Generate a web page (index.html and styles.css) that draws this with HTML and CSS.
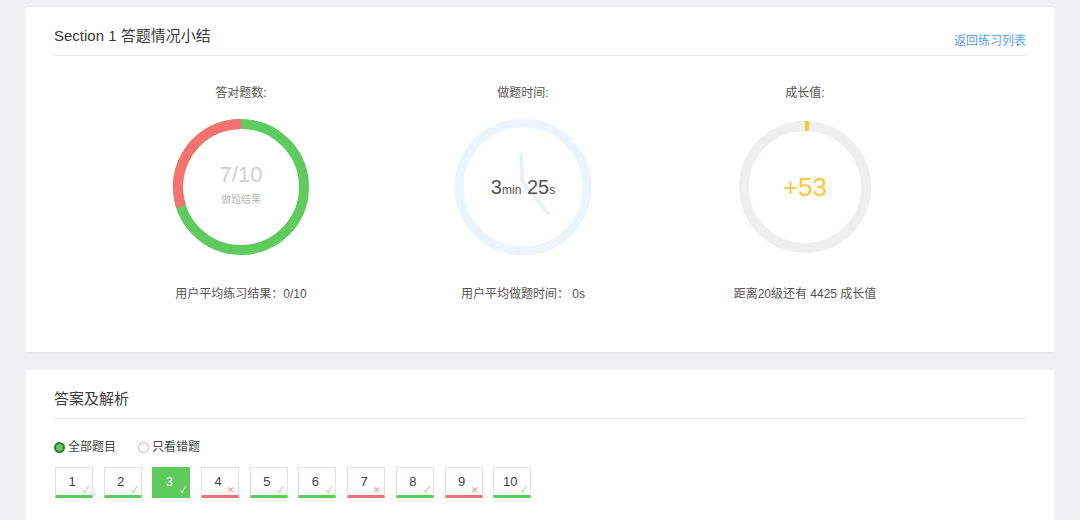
FILE: index.html
```html
<!DOCTYPE html>
<html lang="zh">
<head>
<meta charset="utf-8">
<title>Section 1 答题情况小结</title>
<link rel="stylesheet" href="styles.css">
</head>
<body>
<div class="page">
  <section class="card summary">
    <div class="card-head">
      <h2 class="card-title">Section 1 答题情况小结</h2>
      <a class="back-link" href="#">返回练习列表</a>
    </div>
    <div class="stats">
      <div class="stat">
        <div class="stat-label">答对题数:</div>
        <div class="ring">
          <svg width="140" height="140" viewBox="0 0 140 140">
            <circle cx="70" cy="70" r="63" fill="none" stroke="#5fcb5f" stroke-width="10"/>
            <circle cx="70" cy="70" r="63" fill="none" stroke="#f87171" stroke-width="10" stroke-dasharray="118.75 400" transform="rotate(-198 70 70)"/>
          </svg>
          <div class="ring-center">
            <div class="score">7/10</div>
            <div class="score-sub">做题结果</div>
          </div>
        </div>
        <div class="stat-foot">用户平均练习结果：0/10</div>
      </div>
      <div class="stat">
        <div class="stat-label">做题时间:</div>
        <div class="ring">
          <svg width="140" height="140" viewBox="0 0 140 140">
            <circle cx="70" cy="70" r="64" fill="none" stroke="#eef4fc" stroke-width="9"/>
            <path d="M68 37 L69.5 65 L95 96" fill="none" stroke="#e8f0fb" stroke-width="4" stroke-linecap="round" stroke-linejoin="round"/>
          </svg>
          <div class="ring-center">
            <div class="time">3<small>min</small> 25<small>s</small></div>
          </div>
        </div>
        <div class="stat-foot">用户平均做题时间： 0s</div>
      </div>
      <div class="stat">
        <div class="stat-label">成长值:</div>
        <div class="ring">
          <svg width="140" height="140" viewBox="0 0 140 140">
            <circle cx="70" cy="70" r="61" fill="none" stroke="#efefef" stroke-width="10"/>
            <circle cx="70" cy="70" r="61" fill="none" stroke="#fcc737" stroke-width="10" stroke-dasharray="4 400" transform="rotate(-90 70 70)"/>
          </svg>
          <div class="ring-center">
            <div class="growth">+53</div>
          </div>
        </div>
        <div class="stat-foot">距离20级还有 4425 成长值</div>
      </div>
    </div>
  </section>

  <section class="card answers">
    <div class="card-head">
      <h2 class="card-title">答案及解析</h2>
    </div>
    <div class="filters">
      <label class="radio on"><span class="dot"></span>全部题目</label>
      <label class="radio"><span class="dot"></span>只看错题</label>
    </div>
    <div class="questions">
      <div class="q ok">1<span class="mark">✓</span></div>
      <div class="q ok">2<span class="mark">✓</span></div>
      <div class="q ok active">3<span class="mark">✓</span></div>
      <div class="q bad">4<span class="mark">✕</span></div>
      <div class="q ok">5<span class="mark">✓</span></div>
      <div class="q ok">6<span class="mark">✓</span></div>
      <div class="q bad">7<span class="mark">✕</span></div>
      <div class="q ok">8<span class="mark">✓</span></div>
      <div class="q bad">9<span class="mark">✕</span></div>
      <div class="q ok">10<span class="mark">✓</span></div>
    </div>
  </section>
</div>
</body>
</html>
```

FILE: styles.css
```css
* { box-sizing: border-box; }
html, body { margin: 0; padding: 0; }
body {
  background: #f0f0f2;
  font-family: "Helvetica Neue", "Liberation Sans", Arial, "Noto Sans CJK SC", sans-serif;
  color: #333;
  width: 1080px;
  height: 520px;
  overflow: hidden;
}
.page {
  padding: 7px 26px 0 26px;
  display: flex;
  flex-direction: column;
  gap: 18px;
}
.card {
  background: #fff;
  padding: 0 28px;
  box-shadow: 0 1px 2px rgba(0,0,0,0.04);
}
.card-head {
  display: flex;
  justify-content: space-between;
  align-items: flex-end;
  border-bottom: 1px solid #e6e6e6;
  height: 49px;
  padding-bottom: 6px;
}
.card-title {
  margin: 0 0 3px 0;
  font-size: 15px;
  font-weight: normal;
  color: #3a3a3a;
  line-height: 20px;
}
.back-link {
  font-size: 12px;
  color: #5b9cf2;
  text-decoration: none;
  line-height: 16px;
}
.summary { height: 345px; }
.stats {
  display: grid;
  grid-template-columns: repeat(3, 282px);
  justify-content: center;
  padding-right: 34px;
  padding-top: 29px;
}
.stat {
  display: flex;
  flex-direction: column;
  align-items: center;
}
.stat-label {
  font-size: 12px;
  color: #555;
  line-height: 16px;
}
.ring {
  position: relative;
  width: 140px;
  height: 140px;
  margin-top: 16px;
}
.ring svg { display: block; }
.ring-center {
  position: absolute;
  inset: 0;
  display: flex;
  flex-direction: column;
  align-items: center;
  justify-content: center;
}
.score {
  font-size: 22px;
  color: #cfcfcf;
  line-height: 24px;
  margin-top: -6px;
}
.score-sub {
  font-size: 10px;
  color: #bbb;
  margin-top: 4px;
}
.time {
  font-size: 20px;
  color: #555;
}
.time small { font-size: 12px; }
.growth {
  font-size: 26px;
  color: #fcc737;
}
.stat-foot {
  font-size: 12px;
  color: #555;
  margin-top: 29px;
  line-height: 16px;
}
.answers { height: 200px; }
.filters {
  display: flex;
  gap: 22px;
  padding-top: 20px;
  font-size: 12px;
  color: #444;
  line-height: 16px;
}
.radio {
  display: flex;
  align-items: center;
  gap: 3px;
}
.dot {
  width: 11px;
  height: 11px;
  border-radius: 50%;
  border: 1px solid #bbb;
  background: #fff;
}
.radio.on .dot {
  border: 2px solid #2f7d2f;
  background: #5fcb5f;
}
.questions {
  display: flex;
  gap: 10.7px;
  margin-top: 12px;
  padding-left: 1px;
}
.q {
  position: relative;
  width: 38px;
  height: 31px;
  border: 1px solid #e2e2e2;
  border-bottom: 3px solid #5fcb5f;
  display: flex;
  align-items: center;
  justify-content: center;
  font-size: 13px;
  color: #444;
  padding-right: 4px;
}
.q.bad { border-bottom-color: #f87171; }
.q.active {
  background: #5fcb5f;
  border-color: #5fcb5f;
  color: #fff;
}
.mark {
  position: absolute;
  right: 3px;
  bottom: 0;
  font-size: 9px;
  line-height: 10px;
  color: #7fd67f;
}
.q.bad .mark { color: #f58a8a; }
.q.active .mark { color: #e8ffe8; }
```
